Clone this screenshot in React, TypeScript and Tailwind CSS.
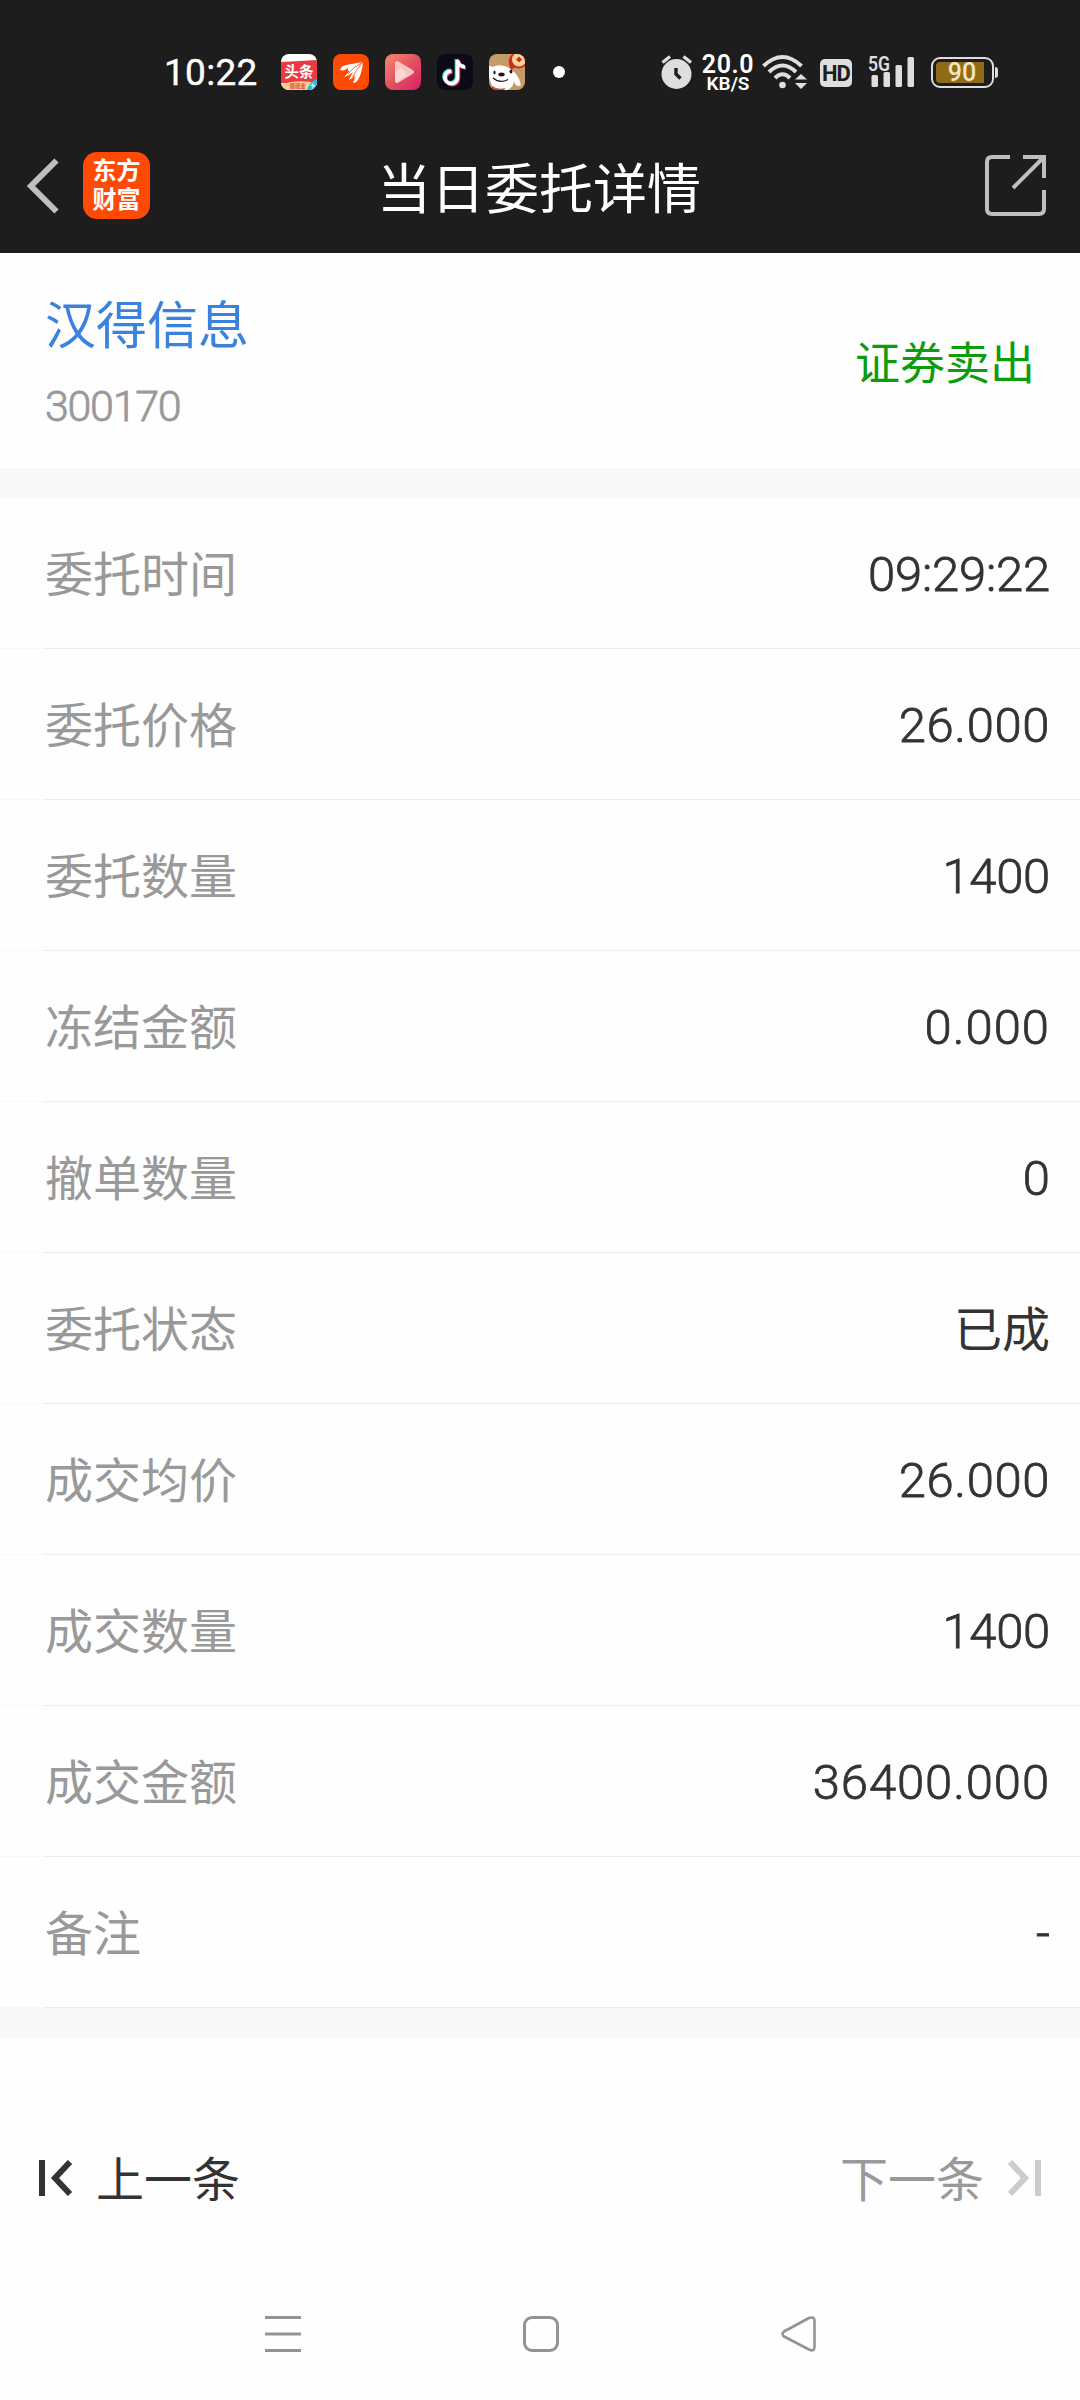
import React from 'react';

const ORDER_ROWS = [
  { label: '委托时间', value: '09:29:22', tracking: 'tracking-[-0.2px]' },
  { label: '委托价格', value: '26.000', tracking: 'tracking-[0.6px]' },
  { label: '委托数量', value: '1400', tracking: 'tracking-[-0.3px]' },
  { label: '冻结金额', value: '0.000', tracking: 'tracking-[1px]' },
  { label: '撤单数量', value: '0', tracking: 'tracking-normal' },
  { label: '委托状态', value: '已成', tracking: 'tracking-normal' },
  { label: '成交均价', value: '26.000', tracking: 'tracking-[0.6px]' },
  { label: '成交数量', value: '1400', tracking: 'tracking-[-0.3px]' },
  { label: '成交金额', value: '36400.000', tracking: 'tracking-[0.9px]' },
  { label: '备注', value: '-', tracking: 'tracking-normal' },
];

const ToutiaoIcon = () => (
  <svg width="36" height="36" viewBox="0 0 36 36">
    <defs>
      <clipPath id="toutiao"><rect width="36" height="36" rx="8" /></clipPath>
    </defs>
    <g clipPath="url(#toutiao)">
      <rect width="36" height="36" fill="#fff" />
      <path d="M0 8 L36 6 V29 H0 Z" fill="#ec3a44" />
      <path d="M0 30 Q18 25 36 29 V36 H0 Z" fill="#f9cf8d" />
      <path d="M36 25 V36 H26 Q28 28 36 25 Z" fill="#25bcd8" />
      <path d="M33 28 L29.500 32 H32 L30.500 35.500 L34.500 31 H32 Z" fill="#fff" />
      <text x="18" y="23" textAnchor="middle" fontSize="14.500" fontWeight="700" fill="#fff">头条</text>
      <text x="16.500" y="34" textAnchor="middle" fontSize="5.500" fontWeight="700" fill="#e8433f">领现金</text>
    </g>
  </svg>
);

const FeatherIcon = () => (
  <svg width="36" height="36" viewBox="0 0 36 36">
    <rect width="36" height="36" rx="8" fill="#ff4a05" />
    <path d="M7 16 Q8 12 13 11 L30 8 Q22 12 17 18 Q14 16 15 13.500 Q11 18 7 16 Z" fill="#fff" />
    <path d="M30 8 Q29 18 26 24 Q24 29 20 29 Q22 24 22 21 Q19 25 16 26 Q18 21 20 18 Q16 22 11 23 Q20 13 30 8 Z" fill="#fff" />
    <path d="M30 8 Q20 13 15 20 M30 8 Q23 16 19.500 23" fill="none" stroke="#ff4a05" strokeWidth="0.800" />
  </svg>
);

const VideoIcon = () => (
  <svg width="36" height="36" viewBox="0 0 36 36">
    <defs>
      <linearGradient id="video" x1="0" y1="0" x2="1" y2="1">
        <stop offset="0" stopColor="#f58a72" />
        <stop offset="0.55" stopColor="#e04d60" />
        <stop offset="1" stopColor="#d81e66" />
      </linearGradient>
    </defs>
    <rect width="36" height="36" rx="8" fill="url(#video)" />
    <path d="M12 9 L27 18 L12 27 Z" fill="#f9c3bf" stroke="#f9c3bf" strokeWidth="4" strokeLinejoin="round" />
    <path d="M10 19 L16 13 L22 21 L12 28 L10 27 Z" fill="#fbd6d2" />
  </svg>
);

const NOTE_PATH = 'M20.500 6 V23.500 A6.300 6.300 0 1 1 14.500 17.200 M20.500 6 Q21.500 12.500 28 13';

const TikTokIcon = () => (
  <svg width="36" height="36" viewBox="0 0 36 36" fill="none" strokeWidth="3.600">
    <rect width="36" height="36" rx="8" fill="#0b0a16" />
    <path d={NOTE_PATH} stroke="#2ee6e4" transform="translate(-1 -1)" />
    <path d={NOTE_PATH} stroke="#f5355c" transform="translate(1 1)" />
    <path d={NOTE_PATH} stroke="#fff" />
  </svg>
);

const DogIcon = () => (
  <svg width="36" height="36" viewBox="0 0 36 36">
    <defs>
      <clipPath id="dog"><rect width="36" height="36" rx="8" /></clipPath>
    </defs>
    <g clipPath="url(#dog)">
      <rect width="36" height="36" fill="#c59b68" />
      <path d="M20 5 Q22 -2 30 -1 H36 V12 Q32 16 26 13.500 L22 16 Q19 11 20 5 Z" fill="#d8271d" />
      <circle cx="30" cy="5.500" r="7" fill="#f7d9a0" />
      <path d="M30 2.500 L33 5.500 L30 8.500 L27 5.500 Z" fill="#d8271d" />
      <path d="M-1 14 Q0 10 3 13 Q12 9 20 14 Q25 17 27 20 Q31 25 32 31 Q27 34 25 27 Q24 36 14 37 Q4 37 2 29 Q-1 22 -1 14 Z" fill="#fff" />
      <path d="M3 32 Q9 36 16 34 L15 37 H3 Z" fill="#cf4a36" />
      <ellipse cx="12.500" cy="20.500" rx="3.200" ry="1.900" fill="#1d1a18" />
      <ellipse cx="5.500" cy="18.500" rx="1.100" ry="1.900" fill="#1d1a18" />
      <ellipse cx="22" cy="17.500" rx="1.500" ry="2.100" fill="#1d1a18" />
      <path d="M4 24 Q11 30 19 25.500" fill="none" stroke="#1d1a18" strokeWidth="1.200" />
    </g>
  </svg>
);

const AlarmIcon = () => (
  <svg width="32" height="36" viewBox="0 0 32 36">
    <circle cx="15.500" cy="20" r="15" fill="#dedede" />
    <path d="M1.500 8.500 L9 2.500 M30 8.500 L22.500 2.500" stroke="#dedede" strokeWidth="3.400" />
    <path d="M15 14 V20 L19.500 24.500" fill="none" stroke="#1d1d1d" strokeWidth="3.400" />
  </svg>
);

const WifiIcon = () => (
  <svg width="46" height="36" viewBox="0 0 46 36" fill="none" stroke="#dedede" strokeWidth="4">
    <path d="M1.500 12 Q20.500 -6 39.500 12" />
    <path d="M7 18 Q20.500 5 34 18" />
    <path d="M13 24 Q20.500 16.500 28 24" />
    <circle cx="20.500" cy="31" r="3.300" fill="#dedede" stroke="none" />
    <path d="M33 25.500 L39 20 L45 25.500 Z M33 29 L39 35 L45 29 Z" fill="#dedede" stroke="none" />
  </svg>
);

const SignalIcon = () => (
  <svg width="48" height="44" viewBox="0 -4 48 44" fill="#dedede">
    <text x="0" y="16.500" fontSize="20" fontWeight="600" textLength="22" lengthAdjust="spacingAndGlyphs">5G</text>
    <rect x="3.500" y="21" width="6.500" height="12" rx="1.500" />
    <rect x="15.500" y="18" width="6.500" height="15" rx="1.500" />
    <rect x="27.500" y="11" width="6.500" height="22" rx="1.500" />
    <rect x="39.500" y="3" width="6.500" height="30" rx="1.500" />
  </svg>
);

const StatusBar = () => (
  <div className="flex h-[118px] items-center pt-[26px] pl-[164px]">
    <span className="w-[117px] pt-px text-[37px] leading-none tracking-[0.3px] text-white [-webkit-text-stroke:0.4px]">10:22</span>
    <div className="flex gap-4">
      <ToutiaoIcon />
      <FeatherIcon />
      <VideoIcon />
      <TikTokIcon />
      <DogIcon />
    </div>
    <span className="ml-[28px] size-3 rounded-full bg-white" />
    <div className="ml-[96px] flex items-center">
      <AlarmIcon />
      <div className="ml-[9px] flex w-[52px] flex-col items-center pt-[2px] text-white">
        <span className="text-[25px] font-semibold leading-[20px] tracking-[0.6px]">20.0</span>
        <span className="text-[19px] font-semibold leading-[17px]">KB/S</span>
      </div>
      <span className="ml-[8px] flex"><WifiIcon /></span>
      <span className="ml-[12px] mt-[2px] flex h-7 w-8 items-center justify-center rounded-[5px] bg-[#dedede] text-[22px] font-bold tracking-[-1px] text-[#1d1d1d]">
        HD
      </span>
      <span className="ml-[16px] flex"><SignalIcon /></span>
      <div className="ml-[15px] mt-px flex h-[31px] w-[63px] items-center rounded-[9px] border-[2.5px] border-[#dedede] pl-[3px]">
        <span className="flex h-[21px] w-[48px] items-center justify-center rounded-l-[4px] bg-[#906c16] pl-1 text-[25px] font-medium leading-none text-[#f3e6c4]">
          90
        </span>
      </div>
      <span className="ml-px h-[11px] w-[3px] rounded-r-sm bg-[#dedede]" />
    </div>
  </div>
);

const TitleBar = () => (
  <div className="grid h-[135px] grid-cols-[1fr_auto_1fr] items-center">
    <div className="flex items-center pl-[27px]">
      <svg width="32" height="56" viewBox="0 0 32 56" fill="none" stroke="#bfbfbf" strokeWidth="6">
        <path d="M29.500 2.500 L4 28 L29.500 53.500" />
      </svg>
      <div className="ml-[24px] flex size-[67px] flex-col items-center justify-center rounded-[14px] bg-[#ff4a05] text-[24px] font-bold leading-[29px] text-white">
        <span>东方</span>
        <span>财富</span>
      </div>
    </div>
    <h1 className="pt-[10px] pr-[2px] text-[54px] leading-none text-white">当日委托详情</h1>
    <svg className="mr-[34px] justify-self-end" width="61" height="61" viewBox="0 0 61 61" fill="none" stroke="#bfbfbf" strokeWidth="4">
      <path d="M25 2 H7 Q2 2 2 7 V54 Q2 59 7 59 H54 Q59 59 59 54 V35" />
      <path d="M38 2 H59 V23 M58 3 L28 33" />
    </svg>
  </div>
);

const SecurityCard = () => (
  <div className="flex h-[215px] items-center justify-between px-[45px]">
    <div className="flex flex-col pt-[11px]">
      <span className="text-[51px] leading-[60px] text-[#3a82dc]">汉得信息</span>
      <span className="mt-[19px] text-[43px] leading-[60px] font-light tracking-[-1.3px] text-[#999] [-webkit-text-stroke:0.8px]">300170</span>
    </div>
    <span className="pt-[7px] text-[45px] leading-none text-[#0c9c0c]">证券卖出</span>
  </div>
);

const OrderRow: React.FC<{ label: string; value: string; tracking: string }> = ({ label, value, tracking }) => {
  const isText = value === '已成';

  return (
    <div className="flex h-[151px] flex-col">
      <div className="flex flex-1 items-center justify-between pt-[5px] pr-[30px] pl-[45px] text-[48px] leading-none">
        <span className="text-[#999]">{label}</span>
        <span className={`text-[#333] ${isText ? '' : 'pb-[2px] text-[49px] font-light [-webkit-text-stroke:0.8px]'} ${tracking}`}>
          {value}
        </span>
      </div>
      <div className="flex h-px">
        <span className="w-[45px] bg-[#f8f8f8]" />
        <span className="flex-1 bg-[#ebebeb]" />
      </div>
    </div>
  );
};

const Pager = () => (
  <div className="flex h-[277px] items-center justify-between px-[39px] pt-[3px] text-[48px] leading-none">
    <button className="flex items-center text-[#333]">
      <svg width="34" height="36" viewBox="0 0 34 36" fill="none" stroke="currentColor" strokeWidth="6">
        <path d="M3 0 V36 M31 2 L16 18 L31 34" />
      </svg>
      <span className="ml-[23px] pt-[5px]">上一条</span>
    </button>
    <button className="flex items-center text-[#999]">
      <span className="mr-[23px] pt-[5px]">下一条</span>
      <svg width="34" height="36" viewBox="0 0 34 36" fill="none" stroke="#ccc" strokeWidth="6">
        <path d="M31 0 V36 M3 2 L18 18 L3 34" />
      </svg>
    </button>
  </div>
);

const SystemNav = () => (
  <div className="flex h-[85px] justify-between pr-[263px] pl-[264px]">
    <svg width="38" height="38" viewBox="0 0 38 38" stroke="#939393" strokeWidth="3">
      <path d="M1 2.500 H37 M1 19 H37 M1 35.500 H37" />
    </svg>
    <svg className="mr-px" width="36" height="38" viewBox="0 0 36 38" fill="none" stroke="#939393" strokeWidth="3">
      <rect x="1.500" y="2.500" width="33" height="33" rx="7.500" />
    </svg>
    <svg width="36" height="38" viewBox="0 -1 36 38" fill="none" stroke="#939393" strokeWidth="2.600" strokeLinejoin="round">
      <path d="M3 15.500 L28 2 Q33.500 0 33.500 5 V31 Q33.500 36 28 33.500 L3 20.500 Q0 18 3 15.500 Z" />
    </svg>
  </div>
);

export default function App() {
  return (
    <div className="flex h-[2400px] w-[1080px] flex-col bg-[#fefefe] font-[Roboto,'Noto_Sans_CJK_SC',sans-serif]">
      <header className="bg-[#1d1d1d]">
        <StatusBar />
        <TitleBar />
      </header>
      <SecurityCard />
      <div className="h-[30px] bg-[#f6f8fa]" />
      <main>
        {ORDER_ROWS.map((row) => (
          <OrderRow key={row.label} {...row} />
        ))}
      </main>
      <div className="h-[30px] bg-[#f6f8fa]" />
      <Pager />
      <SystemNav />
    </div>
  );
}
